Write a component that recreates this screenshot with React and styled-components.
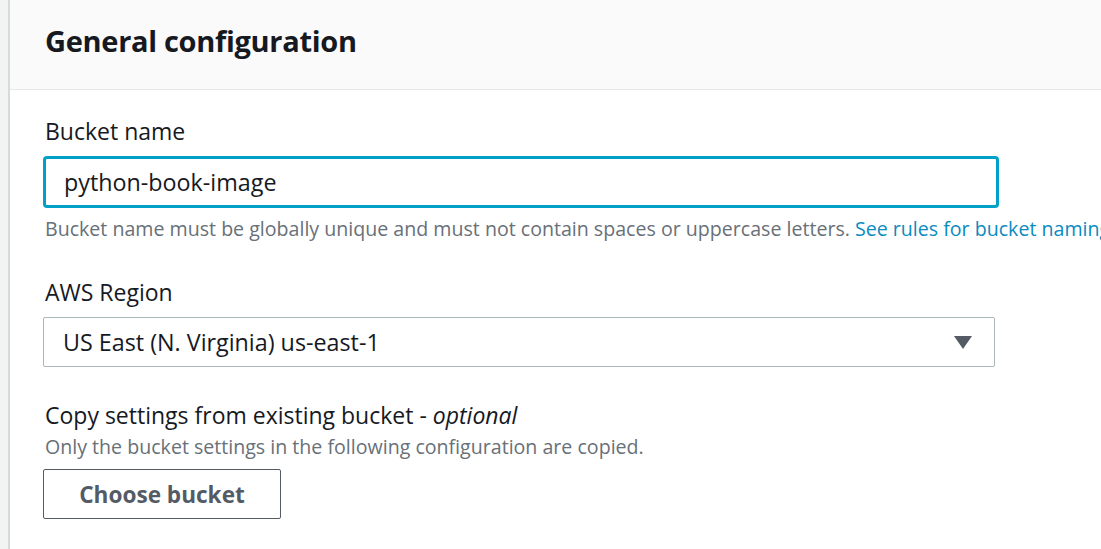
import React from "react";
import styled, { createGlobalStyle } from "styled-components";

const GlobalStyle = createGlobalStyle`
  html, body {
    margin: 0;
    padding: 0;
    background: #f2f3f3;
    overflow: hidden;
  }
  body {
    font-family: "Open Sans", "Liberation Sans", sans-serif;
    color: #16191f;
  }
`;

const Page = styled.div`
  width: 1101px;
  height: 549px;
  display: flex;
  padding-left: 8px;
  box-sizing: border-box;
  overflow: hidden;
`;

const Panel = styled.section`
  flex: 1;
  min-width: 0;
  background: #fff;
  border-left: 2px solid #d5dbdb;
  display: flex;
  flex-direction: column;
`;

const PanelHeader = styled.header`
  height: 90px;
  box-sizing: border-box;
  background: #fafafa;
  border-bottom: 1px solid #e5e8e8;
  padding: 23px 35px 0;
`;

const Title = styled.h2`
  margin: 0;
  font-size: 29px;
  line-height: 36px;
  font-weight: 700;
  letter-spacing: -0.3px;
  color: #16191f;
`;

const Body = styled.div`
  padding: 27px 0 0 33px;
  display: flex;
  flex-direction: column;
`;

const Field = styled.div`
  display: flex;
  flex-direction: column;
  margin-bottom: ${(p) => p.$gap || 0}px;
`;

const Label = styled.label`
  font-size: 23px;
  line-height: 28px;
  padding-left: 2px;
  margin-bottom: ${(p) => p.$space ?? 11}px;
  color: #16191f;
  white-space: nowrap;

  em {
    font-style: italic;
  }
`;

const TextInput = styled.div`
  width: 956px;
  height: 52px;
  box-sizing: border-box;
  border: 3px solid #00a1c9;
  border-radius: 4px;
  display: flex;
  align-items: center;
  padding-left: 18px;
  font-size: 23.3px;
  color: #16191f;
`;

const Hint = styled.div`
  font-size: 19.6px;
  line-height: 26px;
  padding-left: 2px;
  color: #687078;
  white-space: nowrap;
  margin-top: ${(p) => p.$top || 0}px;

  a {
    color: #0b8bc0;
    text-decoration: none;
  }
`;

const Select = styled.div`
  width: 952px;
  height: 50px;
  box-sizing: border-box;
  border: 1px solid #aab7b8;
  border-radius: 2px;
  display: flex;
  align-items: center;
  justify-content: space-between;
  padding: 0 22px 0 19px;
  font-size: 23.3px;
  color: #16191f;
`;

const Caret = styled.span`
  width: 0;
  height: 0;
  border-left: 9px solid transparent;
  border-right: 9px solid transparent;
  border-top: 13px solid #545b64;
`;

const Button = styled.button`
  align-self: flex-start;
  width: 238px;
  height: 50px;
  margin-top: 9px;
  background: #fff;
  border: 1px solid #545b64;
  border-radius: 2px;
  font-family: inherit;
  font-size: 22.6px;
  font-weight: 700;
  color: #545b64;
  cursor: pointer;
`;

export default function App() {
  return (
    <>
      <GlobalStyle />
      <Page>
        <Panel>
          <PanelHeader>
            <Title>General configuration</Title>
          </PanelHeader>
          <Body>
            <Field $gap={36}>
              <Label>Bucket name</Label>
              <TextInput>python-book-image</TextInput>
              <Hint $top={8}>
                Bucket name must be globally unique and must not contain spaces or
                uppercase letters. <a href="#">See rules for bucket naming</a>
              </Hint>
            </Field>
            <Field $gap={34}>
              <Label>AWS Region</Label>
              <Select>
                <span>US East (N. Virginia) us-east-1</span>
                <Caret />
              </Select>
            </Field>
            <Field>
              <Label $space={5}>
                Copy settings from existing bucket - <em>optional</em>
              </Label>
              <Hint>Only the bucket settings in the following configuration are copied.</Hint>
              <Button>Choose bucket</Button>
            </Field>
          </Body>
        </Panel>
      </Page>
    </>
  );
}
